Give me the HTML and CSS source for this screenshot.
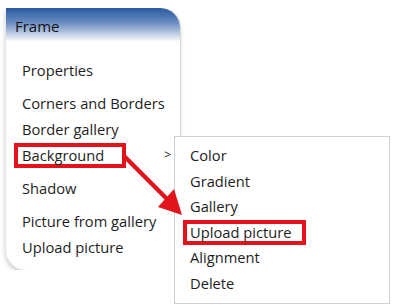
FILE: index.html
```html
<!DOCTYPE html>
<html>
<head>
<meta name="viewport" content="width=device-width, initial-scale=1.0">
<link rel="stylesheet" href="styles.css">
</head>
<body>

<div class="frame-panel">
  <div class="frame-title">Frame</div>
  <ul class="menu">
    <li>Properties</li>
  </ul>
  <ul class="menu">
    <li>Corners and Borders</li>
    <li>Border gallery</li>
    <li class="has-sub"><span class="mark mark-wide">Background</span><span class="chevron">&gt;</span></li>
  </ul>
  <ul class="menu">
    <li>Shadow</li>
  </ul>
  <ul class="menu">
    <li>Picture from gallery</li>
    <li>Upload picture</li>
  </ul>
</div>

<!-- submenu of Background -->
<ul class="submenu">
  <li>Color</li>
  <li>Gradient</li>
  <li>Gallery</li>
  <li><span class="mark">Upload picture</span></li>
  <li>Alignment</li>
  <li>Delete</li>
</ul>

<svg class="pointer" width="396" height="308" viewBox="0 0 396 308">
  <line x1="124" y1="156" x2="167" y2="199" stroke="#e3131b" stroke-width="4.5"/>
  <polygon points="182,215 158,207 174,189" fill="#e3131b"/>
</svg>

</body>
</html>
```

FILE: styles.css
```css
* {box-sizing: border-box;}

body {
  margin: 0;
  font-family: "Open Sans", "Noto Sans", sans-serif;
  font-size: 14.7px;
  color: #1e1e1e;
  background: #fff;
}

.frame-panel {
  width: 175px;
  height: 262px;
  margin: 8px 0 0 6px;
  border-right: 1px solid #d8d8d8;
  border-radius: 0 20px 0 20px;
  box-shadow: -1px 3px 5px rgba(0,0,0,0.18);
  background: #fff;
  padding-bottom: 9px;
}

.frame-title {
  height: 34px;
  padding: 8px 0 0 9px;
  font-size: 15px;
  color: #111;
  border-radius: 0 20px 0 0;
  background: linear-gradient(#2a58a0 0%, #6e8fc2 45%, #fff 100%);
}

.menu {
  list-style: none;
  margin: 0;
  padding: 0 0 0 16px;
}

.menu:first-of-type {
  padding-top: 15px;
}

.menu + .menu {
  margin-top: 7px;
}

.menu li {
  height: 26px;
  line-height: 26px;
  white-space: nowrap;
}

.has-sub {
  display: flex;
  align-items: center;
}

.chevron {
  margin: 0 9px 0 auto;
  font-size: 12px;
}

.mark {
  display: inline-block;
  line-height: 17px;
  padding: 0 11px 0 3px;
  margin-left: -7px;
  border: 4px solid #e3131b;
}

.mark-wide {
  padding: 0 18px 0 4px;
  margin-left: -8px;
}

.submenu {
  position: absolute;
  left: 174px;
  top: 136px;
  width: 216px;
  margin: 0;
  padding: 6px 0 6px 15px;
  list-style: none;
  background: #fff;
  border: 1px solid #d0d0d0;
}

.submenu li {
  height: 25.6px;
  line-height: 25.6px;
}

.pointer {
  position: absolute;
  left: 0;
  top: 0;
}
```
